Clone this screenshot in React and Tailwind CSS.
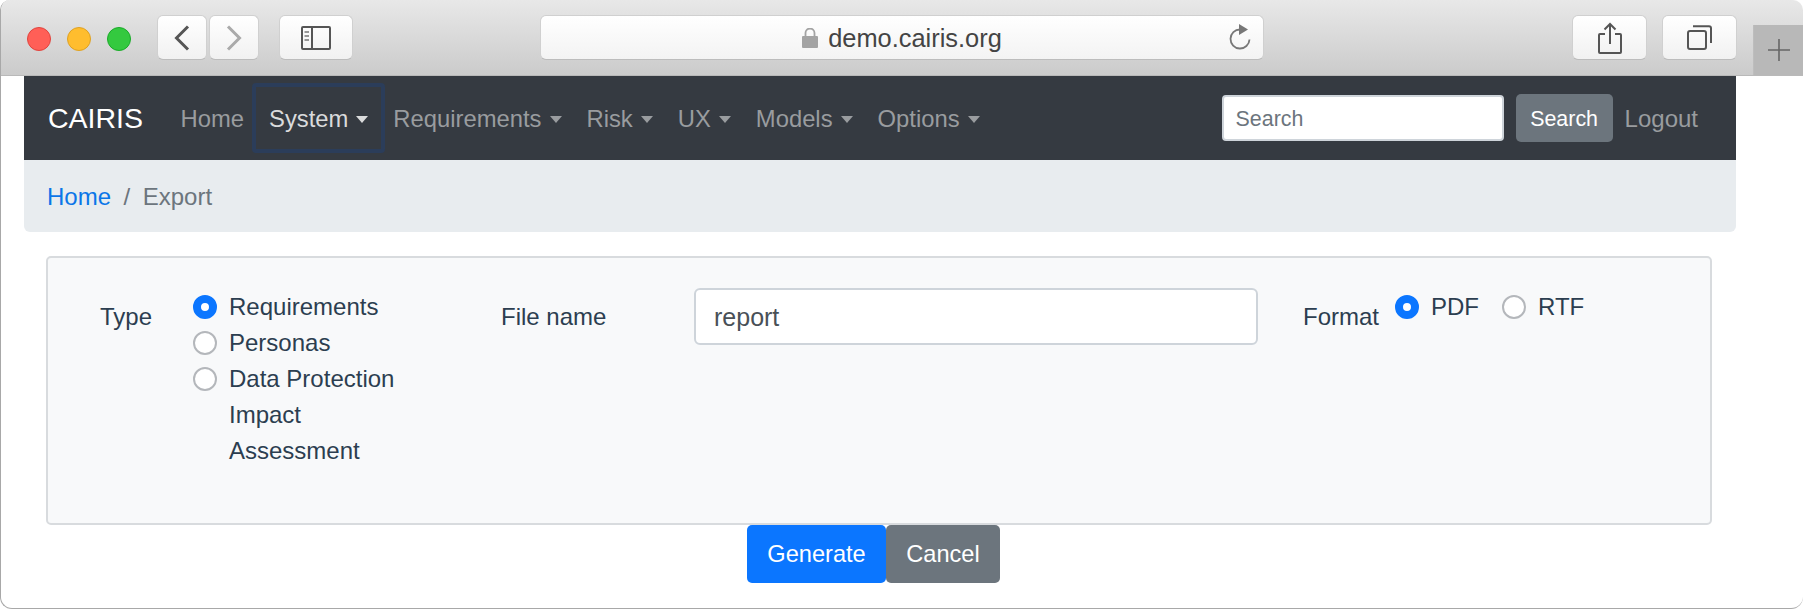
import React from "react";

const navItems = [
  { label: "Home" },
  { label: "System", caret: true, active: true },
  { label: "Requirements", caret: true },
  { label: "Risk", caret: true },
  { label: "UX", caret: true },
  { label: "Models", caret: true },
  { label: "Options", caret: true },
];

const toolbarBtn =
  "flex items-center justify-center h-[45px] rounded-[6px] border border-[#d0d0d0] border-b-[#bcbcbc] bg-gradient-to-b from-white to-[#f1f1f1]";

const Caret = () => (
  <span className="ml-[8px] inline-block h-0 w-0 border-x-[6.5px] border-t-[7px] border-x-transparent border-t-current" />
);

const Radio = ({ name, checked }) => (
  <input
    type="radio"
    name={name}
    defaultChecked={checked}
    className="h-[24px] w-[24px] shrink-0 appearance-none rounded-full border-2 border-[#b4b7bb] bg-white checked:border-[8px] checked:border-[#0b76ff]"
  />
);

const Toolbar = () => (
  <div className="flex h-[76px] items-center border-b border-[#b9b9b9] bg-gradient-to-b from-[#e8e8e8] to-[#cbcbcb] pl-[26px]">
    <div className="mt-[2px] flex gap-[16px]">
      <span className="h-[24px] w-[24px] rounded-full border border-[#e0443e] bg-[#ff5f57]" />
      <span className="h-[24px] w-[24px] rounded-full border border-[#dea123] bg-[#ffbd2e]" />
      <span className="h-[24px] w-[24px] rounded-full border border-[#1aab29] bg-[#34c93f]" />
    </div>
    <div className="ml-[26px] flex gap-[2px]">
      <div className={`${toolbarBtn} w-[50px]`}>
        <svg width="16" height="26" viewBox="0 0 16 26" fill="none" stroke="#555" strokeWidth="3">
          <path d="M14 1.5 2.5 13 14 24.5" />
        </svg>
      </div>
      <div className={`${toolbarBtn} w-[50px]`}>
        <svg width="16" height="26" viewBox="0 0 16 26" fill="none" stroke="#aaa" strokeWidth="3">
          <path d="M2 1.5 13.5 13 2 24.5" />
        </svg>
      </div>
    </div>
    <div className={`${toolbarBtn} ml-[20px] w-[74px]`}>
      <svg width="30" height="24" viewBox="0 0 30 24" fill="none" stroke="#555" strokeWidth="2">
        <rect x="1" y="1" width="28" height="22" rx="1" />
        <path d="M11 1v22" />
        <path d="M3.5 6H8M3.5 10H8M3.5 14H8" strokeWidth="1.6" stroke="#777" />
      </svg>
    </div>
    <div className={`${toolbarBtn} relative ml-[187px] w-[724px] gap-[10px] bg-gradient-to-b from-white to-[#f3f3f3]`}>
      <svg width="16" height="20" viewBox="0 0 16 20" fill="#a3a3a3">
        <rect x="0" y="8" width="16" height="12" rx="1" />
        <path d="M3.5 9V5a4.5 4.5 0 0 1 9 0v4" fill="none" stroke="#a3a3a3" strokeWidth="1.8" />
      </svg>
      <span className="pt-[3px] text-[25.4px] leading-none text-[#444]">demo.cairis.org</span>
      <svg className="absolute right-[12px] top-[7px]" width="23" height="27" viewBox="0 0 23 27" fill="none" stroke="#777" strokeWidth="1.8">
        <path d="M12 6.5a9.5 9.5 0 1 0 9.5 10" />
        <path d="M11 1l9 5.5-9 5.5z" fill="#777" stroke="none" />
      </svg>
    </div>
    <div className={`${toolbarBtn} ml-[308px] w-[75px]`}>
      <svg width="24" height="32" viewBox="0 0 24 32" fill="none" stroke="#555" strokeWidth="2">
        <path d="M7 12H2a1 1 0 0 0-1 1v17a1 1 0 0 0 1 1h20a1 1 0 0 0 1-1V13a1 1 0 0 0-1-1h-5" />
        <path d="M12 22V2M6.5 7.5 12 2l5.5 5.5" />
      </svg>
    </div>
    <div className={`${toolbarBtn} ml-[15px] w-[75px]`}>
      <svg width="25" height="25" viewBox="0 0 25 25" fill="none" stroke="#555" strokeWidth="2">
        <rect x="1" y="6" width="18" height="18" rx="2" />
        <path d="M6 1.2h16a2 2 0 0 1 2 2V18" />
      </svg>
    </div>
    <div className="ml-auto flex h-[50px] w-[50px] items-center justify-center self-end border-l border-[#bdbdbd] bg-[#b8b8b8]">
      <svg width="24" height="24" viewBox="0 0 24 24" stroke="#666" strokeWidth="1.6">
        <path d="M12 1v22M1 12h22" />
      </svg>
    </div>
  </div>
);

const Navbar = () => (
  <nav className="flex h-[84px] items-center bg-[#353a41] pl-[24px] pr-[38px]">
    <span className="text-[28.5px] text-white">CAIRIS</span>
    <ul className="ml-[25px] flex items-center text-[23.8px] text-[#999c9f]">
      {navItems.map((item) => (
        <li
          key={item.label}
          className={`flex h-[70px] items-center rounded-[4px] border-[4px] pt-[2px] ${
            item.active
              ? "-mx-[4.5px] border-[#2b3d5a] px-[13px] text-[#dadbdc]"
              : "border-transparent px-[8.5px]"
          }`}
        >
          {item.label}
          {item.caret && <Caret />}
        </li>
      ))}
    </ul>
    <div className="ml-auto flex items-center">
      <input
        placeholder="Search"
        className="h-[46px] w-[282px] rounded-[4px] border-2 border-[#ced4da] bg-white px-[12px] pt-[2px] text-[21.4px] placeholder:text-[#6c757d]"
      />
      <button className="ml-[12px] h-[48px] w-[97px] rounded-[5px] bg-[#6c757d] pt-[2px] text-[21.4px] text-white">
        Search
      </button>
      <span className="ml-[12px] pt-[2px] text-[24px] text-[#999c9f]">Logout</span>
    </div>
  </nav>
);

const ExportForm = () => (
  <div className="ml-[22px] mr-[24px] mt-[24px] flex h-[269px] items-start rounded-[5px] border-2 border-[#d8dbde] bg-[#f8f9fa] pt-[31px] text-[24px] leading-[36px] text-[#2c3e50]">
    <span className="ml-[52px] mt-[10px] w-[93px]">Type</span>
    <div className="w-[308px]">
      <label className="flex items-center gap-[12px]">
        <Radio name="type" checked />
        Requirements
      </label>
      <label className="flex items-center gap-[12px]">
        <Radio name="type" />
        Personas
      </label>
      <label className="flex items-start gap-[12px]">
        <span className="mt-[6px] flex">
          <Radio name="type" />
        </span>
        <span className="w-[190px]">Data Protection Impact Assessment</span>
      </label>
    </div>
    <span className="mt-[10px] w-[193px]">File name</span>
    <input
      defaultValue="report"
      className="-mt-[1px] h-[57px] w-[564px] rounded-[6px] border-2 border-[#ced4da] bg-white px-[18px] pt-[2px] text-[25px] text-[#495057]"
    />
    <span className="ml-[45px] mt-[10px] w-[92px]">Format</span>
    <label className="flex items-center gap-[12px]">
      <Radio name="format" checked />
      PDF
    </label>
    <label className="ml-[23px] flex items-center gap-[12px]">
      <Radio name="format" />
      RTF
    </label>
  </div>
);

export default function App() {
  return (
    <div className="h-[609px] w-[1803px] overflow-hidden rounded-t-[10px] rounded-b-[12px] border-l border-b border-[#a8a8a8] bg-white font-['Liberation_Sans',sans-serif]">
      <Toolbar />
      <div className="ml-[23px] w-[1712px]">
        <Navbar />
        <div className="flex h-[72px] items-center rounded-b-[6px] bg-[#e8ecef] pl-[23px] pt-[2px] text-[24px] text-[#6c757d]">
          <span className="text-[#0b76e8]">Home</span>
          <span className="mx-[12.5px]">/</span>
          <span>Export</span>
        </div>
        <ExportForm />
        <div className="flex justify-center pr-[13px] text-[23.6px] text-white">
          <button className="h-[58px] w-[139px] rounded-[5px] bg-[#0b76ff] pt-[2px]">Generate</button>
          <button className="h-[58px] w-[114px] rounded-[5px] bg-[#6c757d] pt-[2px]">Cancel</button>
        </div>
      </div>
    </div>
  );
}
